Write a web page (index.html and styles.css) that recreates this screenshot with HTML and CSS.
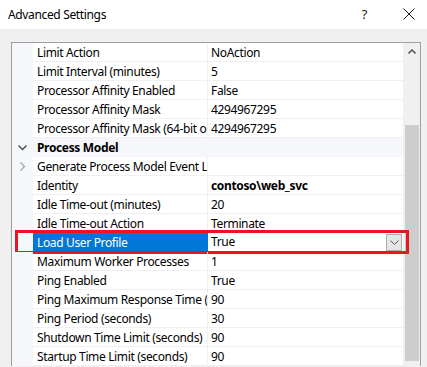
FILE: index.html
```html
<!DOCTYPE html>
<html lang="en">
<head>
    <meta charset="UTF-8">
    <title>Advanced Settings</title>
    <link rel="stylesheet" href="styles.css">
</head>
<body>
    <div class="titlebar">
        <span class="title">Advanced Settings</span>
        <span class="help">?</span>
        <svg class="close" width="12" height="12" viewBox="0 0 12 12">
            <path d="M0.5 0.5 L11.5 11.5 M11.5 0.5 L0.5 11.5" stroke="#1a1a1a" stroke-width="1" fill="none"/>
        </svg>
    </div>

    <div class="content">
        <div class="grid">
            <div class="rows">
                <div class="row"><span class="gutter"></span><span class="name">Limit Action</span><span class="value">NoAction</span></div>
                <div class="row"><span class="gutter"></span><span class="name">Limit Interval (minutes)</span><span class="value">5</span></div>
                <div class="row"><span class="gutter"></span><span class="name">Processor Affinity Enabled</span><span class="value">False</span></div>
                <div class="row"><span class="gutter"></span><span class="name">Processor Affinity Mask</span><span class="value">4294967295</span></div>
                <div class="row"><span class="gutter"></span><span class="name">Processor Affinity Mask (64-bit option)</span><span class="value">4294967295</span></div>

                <div class="row category">
                    <span class="gutter">
                        <svg width="9" height="6" viewBox="0 0 9 6"><path d="M0.5 0.5 L4.5 4.5 L8.5 0.5" stroke="#444" stroke-width="1.3" fill="none"/></svg>
                    </span>
                    <span class="cat-name">Process Model</span>
                </div>

                <div class="row">
                    <span class="gutter">
                        <svg width="6" height="9" viewBox="0 0 6 9"><path d="M0.5 0.5 L4.5 4.5 L0.5 8.5" stroke="#a6a6a6" stroke-width="1.3" fill="none"/></svg>
                    </span>
                    <span class="name">Generate Process Model Event Log Entry</span><span class="value"></span>
                </div>
                <div class="row"><span class="gutter"></span><span class="name">Identity</span><span class="value bold">contoso\web_svc</span></div>
                <div class="row"><span class="gutter"></span><span class="name">Idle Time-out (minutes)</span><span class="value">20</span></div>
                <div class="row"><span class="gutter"></span><span class="name">Idle Time-out Action</span><span class="value">Terminate</span></div>
                <div class="row selected">
                    <span class="gutter"></span>
                    <span class="name">Load User Profile</span>
                    <span class="value">
                        True
                        <span class="dropdown">
                            <svg width="9" height="5" viewBox="0 0 9 5"><path d="M0.5 0.5 L4.5 4.5 L8.5 0.5" stroke="#555" stroke-width="1" fill="none"/></svg>
                        </span>
                    </span>
                </div>
                <div class="row"><span class="gutter"></span><span class="name">Maximum Worker Processes</span><span class="value">1</span></div>
                <div class="row"><span class="gutter"></span><span class="name">Ping Enabled</span><span class="value">True</span></div>
                <div class="row"><span class="gutter"></span><span class="name">Ping Maximum Response Time (seconds)</span><span class="value">90</span></div>
                <div class="row"><span class="gutter"></span><span class="name">Ping Period (seconds)</span><span class="value">30</span></div>
                <div class="row"><span class="gutter"></span><span class="name">Shutdown Time Limit (seconds)</span><span class="value">90</span></div>
                <div class="row"><span class="gutter"></span><span class="name">Startup Time Limit (seconds)</span><span class="value">90</span></div>
            </div>

            <div class="scrollbar">
                <div class="arrow">
                    <svg width="8" height="5" viewBox="0 0 8 5"><path d="M0.5 4.5 L4 1 L7.5 4.5" stroke="#606060" stroke-width="1.6" fill="none"/></svg>
                </div>
                <div class="thumb"></div>
            </div>
        </div>
    </div>
</body>
</html>
```

FILE: styles.css
```css
body {
    margin: 0;
    font-family: 'Noto Sans', sans-serif;
    font-size: 12px;
    letter-spacing: -0.35px;
    color: #000000;
    background: #f0f0f0;
    height: 367px;
    overflow: hidden;
}

.titlebar {
    height: 29px;
    background: #ffffff;
    display: flex;
    align-items: center;
    padding: 0 12px 0 8px;
}

.title {
    flex: 1;
    font-size: 12px;
    color: #000000;
    margin-top: -1px;
}

.help {
    font-size: 13px;
    color: #1a1a1a;
    margin-right: 36px;
    margin-top: -1px;
}

.close {
    margin-top: -1px;
}

.content {
    padding: 13px 6px 0 11px;
}

.grid {
    display: flex;
    border: 1px solid #a0a0a0;
    border-bottom: none;
    background: #ffffff;
}

.rows {
    width: 391px;
}

.row {
    display: grid;
    grid-template-columns: 21px 175px 1fr;
    height: 19px;
    position: relative;
}

.gutter {
    background: #f5f7fb;
    display: flex;
    align-items: center;
    justify-content: center;
}

.name,
.value {
    display: flex;
    align-items: center;
    border-bottom: 1px solid #eef0f3;
    white-space: nowrap;
    overflow: hidden;
    line-height: 18px;
    padding-top: 1px;
}

.name {
    padding-left: 4px;
    border-right: 1px solid #eef0f3;
}

.value {
    padding-left: 3px;
}

.bold {
    font-weight: bold;
}

.category {
    background: #f5f7fb;
}

.cat-name {
    grid-column: 2 / 4;
    font-weight: bold;
    padding-left: 4px;
    display: flex;
    align-items: center;
}

.selected .name {
    background: #0078d7;
    color: #ffffff;
    border-right-color: #0078d7;
}

.selected .value {
    justify-content: space-between;
    padding-top: 0;
}

.selected::after {
    content: "";
    position: absolute;
    left: 3px;
    top: -3px;
    right: -6px;
    bottom: -2px;
    border: 3px solid #e8161f;
}

.dropdown {
    width: 14px;
    height: 15px;
    margin-right: 1px;
    background: #e5e5e5;
    border: 1px solid #adadad;
    display: flex;
    align-items: center;
    justify-content: center;
}

.scrollbar {
    width: 17px;
    background: #f0f0f0;
    display: flex;
    flex-direction: column;
    align-items: center;
}

.arrow {
    height: 17px;
    display: flex;
    align-items: center;
    justify-content: center;
}

.thumb {
    margin-top: 65px;
    width: 14px;
    height: 236px;
    background: #cdcdcd;
}
```
